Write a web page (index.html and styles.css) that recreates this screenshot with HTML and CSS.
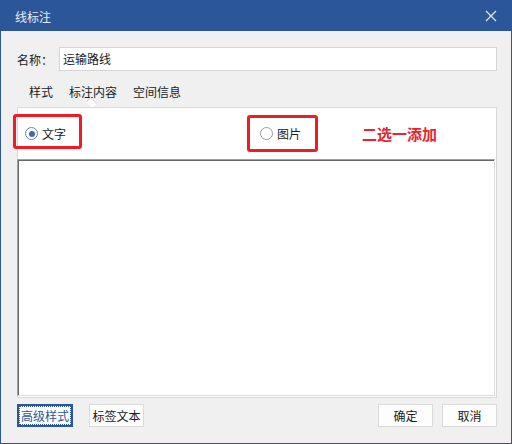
FILE: index.html
```html
<!DOCTYPE html>
<html lang="zh">
<head>
    <meta charset="UTF-8">
    <title>线标注</title>
    <link rel="stylesheet" href="styles.css">
</head>
<body>

    <div class="window">
        <!-- 标题栏 -->
        <div class="titlebar">
            <span class="title">线标注</span>
            <svg class="close" width="12" height="12" viewBox="0 0 12 12">
                <path d="M1 1 L11 11 M11 1 L1 11" stroke="#dfe6f0" stroke-width="1.3" fill="none"/>
            </svg>
        </div>

        <div class="content">
            <div class="name-row">
                <label class="name-label">名称：</label>
                <div class="name-input">运输路线</div>
            </div>

            <div class="tabs">
                <span class="tab">样式</span>
                <span class="tab active">标注内容</span>
                <span class="tab">空间信息</span>
            </div>

            <div class="panel">
                <div class="radio-row">
                    <span class="radio checked"></span>
                    <span class="radio-text">文字</span>
                    <span class="radio second"></span>
                    <span class="radio-text">图片</span>
                    <span class="note">二选一添加</span>
                </div>
                <div class="textbox"></div>
            </div>

            <div class="buttons">
                <button class="btn focused">高级样式</button>
                <button class="btn label-btn">标签文本</button>
                <span class="spacer"></span>
                <button class="btn">确定</button>
                <button class="btn">取消</button>
            </div>
        </div>

        <!-- 红框标记 -->
        <div class="mark mark-text"></div>
        <div class="mark mark-pic"></div>
    </div>

</body>
</html>
```

FILE: styles.css
```css
body {
    margin: 0;
    font-family: "Noto Sans CJK SC", "Noto Sans", sans-serif;
    font-size: 12px;
    color: #1a1a1a;
}
.window {
    position: relative;
    width: 512px;
    height: 444px;
    box-sizing: border-box;
    border: 1px solid #2b579a;
    border-top: none;
    background: #f0f0f0;
    display: flex;
    flex-direction: column;
}
.titlebar {
    height: 31px;
    background: #2b579a;
    display: flex;
    align-items: center;
    padding: 0 16px 0 15px;
    margin: 0 -1px;
}
.title {
    color: #e9edf3;
    font-size: 12px;
    flex: 1;
    padding-top: 2px;
}
.close {
    margin-right: -1px;
    margin-top: 1px;
}
.content {
    padding: 16px 14px 0 16px;
    display: flex;
    flex-direction: column;
}
.name-row {
    display: flex;
    align-items: center;
    height: 24px;
}
.name-label {
    width: 42px;
}
.name-input {
    flex: 1;
    height: 24px;
    box-sizing: border-box;
    border: 1px solid #d5d5d5;
    background: #fff;
    padding: 0 3px;
    line-height: 22px;
}
.tabs {
    display: flex;
    padding: 13px 0 0 4px;
    height: 23px;
}
.tab {
    position: relative;
    padding: 0 8px;
    line-height: 16px;
    height: 16px;
    color: #222;
}
.tab.active::after {
    content: "";
    position: absolute;
    left: 50%;
    bottom: -7px;
    margin-left: -6px;
    width: 8px;
    height: 8px;
    background: #fff;
    border-left: 1px solid #d5d5d5;
    border-top: 1px solid #d5d5d5;
    transform: rotate(45deg) scaleY(0.7);
    transform-origin: center;
}
.panel {
    position: relative;
    height: 291px;
    box-sizing: border-box;
    border: 1px solid #d9d9d9;
    background: #fff;
    display: flex;
    flex-direction: column;
}
.radio-row {
    height: 51px;
    display: flex;
    align-items: center;
    padding-left: 7px;
}
.radio {
    width: 13px;
    height: 13px;
    box-sizing: border-box;
    border-radius: 50%;
    border: 1px solid #9a9a9a;
    background: #fff;
    margin-right: 4px;
    position: relative;
}
.radio.checked {
    border-color: #6f86a8;
}
.radio.checked::after {
    content: "";
    position: absolute;
    left: 2.5px;
    top: 2.5px;
    width: 6px;
    height: 6px;
    border-radius: 50%;
    background: #3e68ad;
}
.radio.second {
    margin-left: 194px;
}
.note {
    margin-left: 61px;
    color: #e8242c;
    font-size: 15px;
    font-weight: bold;
}
.textbox {
    height: 237px;
    margin: 0 1px 0 -1px;
    box-sizing: border-box;
    border-top: 1px solid #a0a0a0;
    border-left: 1px solid #a0a0a0;
    border-right: 1px solid #dcdcdc;
    border-bottom: 1px solid #dcdcdc;
    box-shadow: inset 1px 1px 0 #696969;
    background: #fff;
}
.buttons {
    display: flex;
    margin-top: 6px;
    height: 23px;
}
.btn {
    height: 23px;
    width: 55px;
    box-sizing: border-box;
    border: 1px solid #dadada;
    background: #fdfdfd;
    font-family: inherit;
    font-size: 12px;
    color: #1a1a1a;
    padding: 0;
    margin-right: 9px;
}
.btn.focused {
    width: 56px;
    border: 2px solid #2b579a;
    outline: 1px dotted #2b579a;
    outline-offset: -3px;
    color: #2b579a;
    margin-right: 16px;
}
.spacer {
    flex: 1;
}
.btn:last-child {
    margin-right: 0;
}
.mark {
    position: absolute;
    border: 3px solid #ee1c25;
    border-radius: 3px;
    box-sizing: border-box;
}
.mark-text {
    left: 12px;
    top: 114px;
    width: 69px;
    height: 35px;
}
.mark-pic {
    left: 246px;
    top: 115px;
    width: 71px;
    height: 37px;
}
```
